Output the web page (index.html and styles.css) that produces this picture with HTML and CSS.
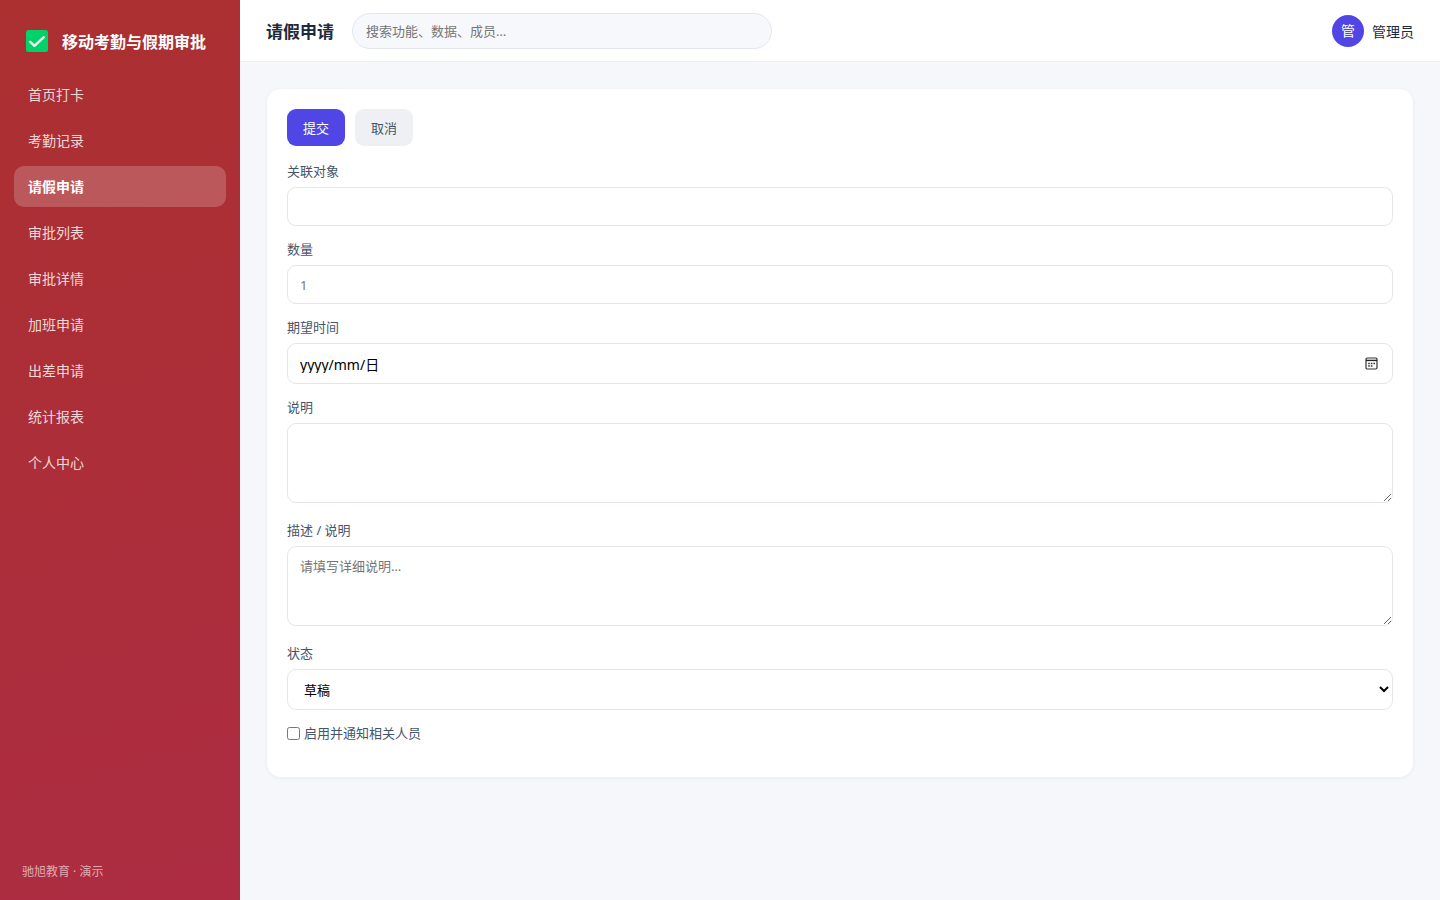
FILE: index.html
```html
<!DOCTYPE html>
<html lang="zh-CN">
<head>
    <meta charset="UTF-8">
    <meta name="viewport" content="width=device-width, initial-scale=1.0">
    <title>请假申请</title>
    <link rel="stylesheet" href="styles.css">
</head>
<body>

    <div class="layout">
        <aside class="sidebar">
            <div class="brand">
                <svg class="brand-icon" viewBox="0 0 22 22" aria-hidden="true">
                    <rect width="22" height="22" rx="2.5" fill="#00d26a"/>
                    <path d="M4.2 11.8l4.3 4L17.8 7.2" fill="none" stroke="#f4f4f4" stroke-width="2.4" stroke-linecap="round" stroke-linejoin="round"/>
                </svg>
                <span>移动考勤与假期审批</span>
            </div>
            <nav class="menu">
                <a href="#">首页打卡</a>
                <a href="#">考勤记录</a>
                <a href="#" class="active">请假申请</a>
                <a href="#">审批列表</a>
                <a href="#">审批详情</a>
                <a href="#">加班申请</a>
                <a href="#">出差申请</a>
                <a href="#">统计报表</a>
                <a href="#">个人中心</a>
            </nav>
            <div class="sidebar-foot">驰旭教育 · 演示</div>
        </aside>

        <div class="main">
            <header class="topbar">
                <h1>请假申请</h1>
                <input class="search" type="search" placeholder="搜索功能、数据、成员…" aria-label="搜索">
                <div class="user">
                    <span class="avatar">管</span>
                    <span>管理员</span>
                </div>
            </header>

            <main class="content">
                <form class="card">
                    <div class="toolbar">
                        <button type="submit" class="btn btn-primary">提交</button>
                        <button type="button" class="btn">取消</button>
                    </div>
                    <div class="field">
                        <label for="target">关联对象</label>
                        <input class="control" type="text" id="target">
                    </div>
                    <div class="field">
                        <label for="count">数量</label>
                        <input class="control" type="number" id="count" placeholder="1">
                    </div>
                    <div class="field">
                        <label for="date">期望时间</label>
                        <div class="control date">
                            <input type="text" id="date" value="yyyy/mm/日">
                            <button type="button" class="date-btn" aria-label="选择日期">
                                <svg viewBox="0 0 13 13" aria-hidden="true">
                                    <rect x="1" y="1" width="11" height="11" rx="1.2" fill="none" stroke="#333" stroke-width="1.2"/>
                                    <path d="M1 3.4h11" stroke="#222" stroke-width="1.4"/>
                                    <path d="M3.2 6.5h1.6M5.8 6.5h1.6M8.4 6.5H10M3.2 9h1.6M5.8 9h1.6" stroke="#333" stroke-width="1.3"/>
                                </svg>
                            </button>
                        </div>
                    </div>
                    <div class="field">
                        <label for="note">说明</label>
                        <textarea class="control" id="note"></textarea>
                    </div>
                    <div class="field">
                        <label for="desc">描述 / 说明</label>
                        <textarea class="control" id="desc" placeholder="请填写详细说明…"></textarea>
                    </div>
                    <div class="field">
                        <label for="status">状态</label>
                        <select class="control" id="status">
                            <option>草稿</option>
                            <option>已提交</option>
                        </select>
                    </div>
                    <label class="check">
                        <input type="checkbox">
                        <span>启用并通知相关人员</span>
                    </label>
                </form>
            </main>
        </div>
    </div>

</body>
</html>
```
FILE: styles.css
```css
* {
    box-sizing: border-box;
}

body {
    margin: 0;
    font-family: "Noto Sans", "Noto Sans CJK SC", sans-serif;
    font-size: 14px;
    color: #1e293b;
    background: #f5f7fb;
}

input, textarea, select, button {
    font-family: inherit;
    font-size: 13px;
}

.layout {
    display: flex;
    min-height: 100vh;
}

/* 侧边栏 */
.sidebar {
    display: flex;
    flex-direction: column;
    flex: none;
    width: 240px;
    padding: 22px 14px 18px;
    color: #fff;
    background: linear-gradient(165deg, #ab3030, #ad2c42);
}

.brand {
    display: flex;
    align-items: center;
    gap: 14px;
    height: 38px;
    margin-bottom: 14px;
    padding: 0 12px;
    font-size: 16px;
    font-weight: bold;
    white-space: nowrap;
}

.brand-icon {
    flex: none;
    width: 22px;
    height: 22px;
}

.menu {
    display: flex;
    flex-direction: column;
    gap: 5px;
}

.menu a {
    height: 41px;
    padding: 0 14px;
    line-height: 41px;
    border-radius: 10px;
    color: rgba(255, 255, 255, .82);
    text-decoration: none;
}

.menu a:hover {
    background: rgba(255, 255, 255, .1);
}

.menu a.active {
    color: #fff;
    font-weight: bold;
    background: rgba(255, 255, 255, .2);
}

.sidebar-foot {
    margin-top: auto;
    padding: 0 8px;
    font-size: 12px;
    line-height: 20px;
    color: rgba(255, 255, 255, .6);
}

/* 顶部栏 */
.main {
    flex: 1;
    min-width: 0;
}

.topbar {
    display: flex;
    align-items: center;
    gap: 18px;
    height: 62px;
    padding: 0 26px;
    background: #fff;
    border-bottom: 1px solid #eceef3;
}

.topbar h1 {
    margin: 0;
    font-size: 17px;
    white-space: nowrap;
}

.search {
    width: 420px;
    height: 36px;
    padding: 0 13px;
    border: 1px solid #e4e6ef;
    border-radius: 18px;
    background: #f7f8fc;
    outline: none;
}

.user {
    display: flex;
    align-items: center;
    gap: 8px;
    margin-left: auto;
}

.avatar {
    width: 32px;
    height: 32px;
    line-height: 32px;
    border-radius: 50%;
    color: #fff;
    text-align: center;
    background: #4f46e5;
}

/* 表单 */
.content {
    padding: 27px;
}

.card {
    padding: 20px;
    border-radius: 14px;
    background: #fff;
    box-shadow: 0 1px 4px rgba(30, 41, 59, .06);
}

.toolbar {
    display: flex;
    gap: 10px;
    margin-bottom: 16px;
}

.btn {
    height: 37px;
    padding: 0 16px;
    border: none;
    border-radius: 9px;
    color: #475569;
    background: #eef0f4;
    cursor: pointer;
}

.btn-primary {
    color: #fff;
    background: #4f46e5;
}

.field {
    margin-bottom: 14px;
}

.field label {
    display: block;
    margin-bottom: 6px;
    font-size: 13px;
    line-height: 19px;
    color: #475569;
}

.control {
    display: block;
    width: 100%;
    height: 39px;
    padding: 0 12px;
    border: 1px solid #e4e6ef;
    border-radius: 9px;
    color: #000;
    background: #fff;
    outline: none;
}

.control:focus {
    border-color: #4f46e5;
}

textarea.control {
    height: 80px;
    margin-bottom: 18px;
    padding: 9px 12px;
    resize: vertical;
}

select.control {
    height: 41px;
}

.date {
    display: flex;
    align-items: center;
    height: 41px;
}

.date input {
    flex: 1;
    min-width: 0;
    padding: 0;
    border: none;
    font-size: 14px;
    outline: none;
}

.date-btn {
    display: flex;
    padding: 0 2px;
    border: none;
    background: none;
}

.date-btn svg {
    width: 13px;
    height: 13px;
}

.check {
    display: flex;
    align-items: center;
    gap: 4px;
    margin-bottom: 14px;
    font-size: 13px;
    line-height: 19px;
    color: #475569;
}

.check input {
    width: 13px;
    height: 13px;
    margin: 0;
}
```
